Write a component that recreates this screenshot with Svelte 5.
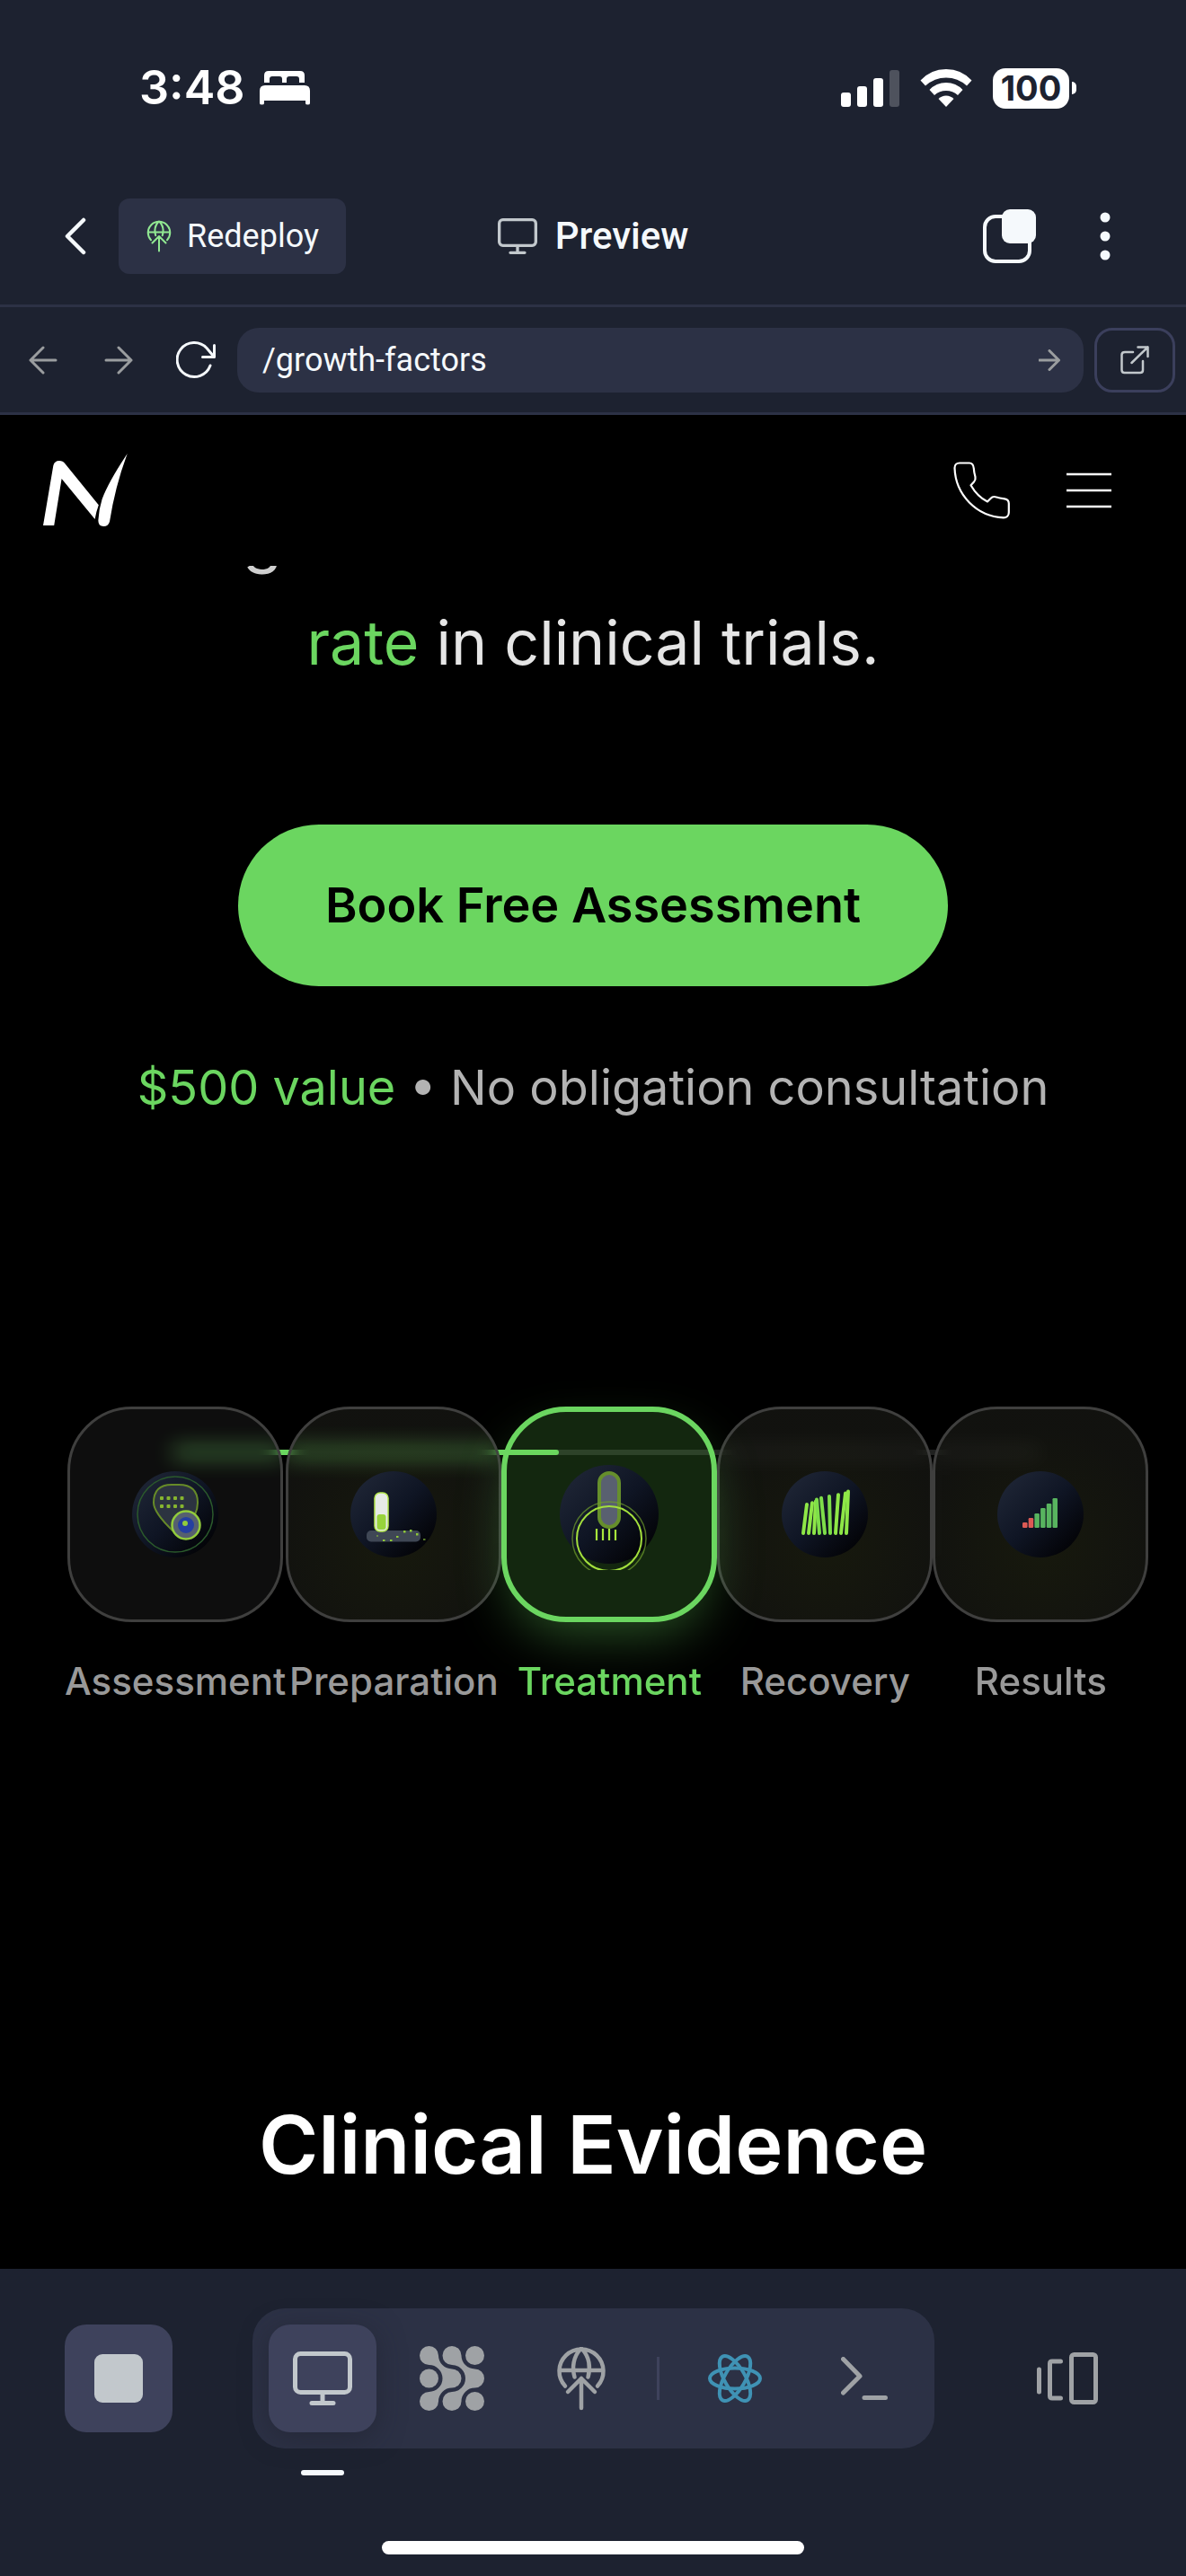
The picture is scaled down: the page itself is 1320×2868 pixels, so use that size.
<script>
  let path = $state('/growth-factors');
  let active = $state('Treatment');
  const steps = ['Assessment', 'Preparation', 'Treatment', 'Recovery', 'Results'];
  const dots = [0, 1, 2, 3].flatMap((c) => [0, 1].map((r) => ({ x: 45 + c * 7.5, y: 42 + r * 9 })));
  const strands = [
    [10, 14], [16, 20], [22, 24], [28, 25], [34, 30], [40, 39], [46, 49], [52, 57], [58, 60]
  ].map(([x, t], i) => ({ x1: x + 28, x2: t + 28, y2: 51 - i * 1.8 }));
</script>

{#snippet globe()}
  <svg class="globe" viewBox="0 0 60 72" aria-hidden="true">
    <path d="M12 44.5A24.5 24.5 0 1 1 48 44.5M6 27H54M29 3.5C21 12 19.500 24 22.500 34.500M31 3.500C39 12 40.500 24 37.500 34.500M30 36V69M15 51L30 36L45 51" />
  </svg>
{/snippet}

{#snippet monitor()}
  <svg class="monitor" viewBox="0 0 66 60" aria-hidden="true">
    <rect x="2.500" y="2.500" width="61" height="43" rx="6" />
    <path d="M33 46V57M21 57.500H45" />
  </svg>
{/snippet}

<div class="screen">
  <div class="status">
    <div class="time">
      <span>3:48</span>
      <svg width="56" height="38" viewBox="0 0 56 38" aria-hidden="true">
        <path fill="#fff" d="M5 13V5Q5 0 10 0H45Q50 0 50 5V13H44V9Q44 6 41 6H33Q30 6 30 9V13H25V9Q25 6 22 6H14Q11 6 11 9V13Z" />
        <path fill="#fff" d="M0 36V22Q0 16 6 16H50Q56 16 56 22V36Q56 37.500 53.500 37.500Q51 37.500 51 36V33H5V36Q5 37.500 2.500 37.500Q0 37.500 0 36Z" />
      </svg>
    </div>
    <div class="signals">
      <svg width="65" height="42" viewBox="0 0 65 42" fill="#fff" aria-hidden="true">
        <rect x="0" y="26" width="11" height="16" rx="3" />
        <rect x="18" y="19" width="11" height="23" rx="3" />
        <rect x="36" y="10" width="11" height="32" rx="3" />
        <rect x="54" y="1" width="11" height="41" rx="3" opacity="0.22" />
      </svg>
      <svg width="58" height="42" viewBox="0 0 58 42" fill="#fff" aria-hidden="true">
        <path d="M0.500 12.500Q12 0 29 0T57.500 12.500L52 18.500Q42 9.500 29 9.500T6 18.500Z" />
        <path d="M10.500 23Q18 15 29 15T47.500 23L42 29Q36.500 24 29 24T16 29Z" />
        <path d="M20.500 33Q24 29.500 29 29.500T37.500 33L29 42Z" />
      </svg>
      <div class="battery"><span>100</span><i></i></div>
    </div>
  </div>

  <header class="title">
    <div class="left">
      <button class="bare" aria-label="Back">
        <svg width="24" height="42" viewBox="0 0 24 42" fill="none" stroke="#f5f9fc" stroke-width="4.500" stroke-linecap="round" stroke-linejoin="round"><path d="M21 3L3 21L21 39" /></svg>
      </button>
      <button class="redeploy">{@render globe()}Redeploy</button>
    </div>
    <h1>{@render monitor()}Preview</h1>
    <div class="right">
      <button class="bare" aria-label="Windows">
        <svg width="60" height="60" viewBox="0 0 60 60" aria-hidden="true">
          <rect x="2" y="8" width="50" height="50" rx="12" fill="none" stroke="#f5f9fc" stroke-width="4" />
          <rect x="21" y="0" width="38" height="38" rx="9" fill="#f5f9fc" />
        </svg>
      </button>
      <button class="bare" aria-label="More">
        <svg width="12" height="54" viewBox="0 0 12 54" fill="#f5f9fc"><circle cx="6" cy="6" r="5.500" /><circle cx="6" cy="27" r="5.500" /><circle cx="6" cy="48" r="5.500" /></svg>
      </button>
    </div>
  </header>

  <nav class="address" aria-label="Address">
    <button class="bare" aria-label="Previous page">
      <svg class="dim" width="32" height="32" viewBox="0 0 32 32"><path d="M30 16H2M16 2L2 16L16 30" /></svg>
    </button>
    <button class="bare" aria-label="Next page">
      <svg class="dim" width="32" height="32" viewBox="0 0 32 32"><path d="M2 16H30M16 2L30 16L16 30" /></svg>
    </button>
    <button class="bare" aria-label="Reload">
      <svg width="44" height="42" viewBox="0 0 44 42" fill="none" stroke="#f5f9fc" stroke-width="3" stroke-linecap="round" stroke-linejoin="round"><path d="M38 27A19 19 0 1 1 34 7.500L42 17M42.500 4.500V17.500H29.500" /></svg>
    </button>
    <form class="field" onsubmit={(e) => e.preventDefault()}>
      <input aria-label="Path" bind:value={path} spellcheck="false" />
      <button class="bare" aria-label="Go">
        <svg class="dim" width="24" height="24" viewBox="0 0 24 24"><path d="M1 12H22.500M12 1.500L22.500 12L12 22.500" /></svg>
      </button>
    </form>
    <button class="open" aria-label="Open in new tab">
      <svg width="32" height="32" viewBox="0 0 32 32" fill="none" stroke="#c2c8cc" stroke-width="2.500" stroke-linecap="round" stroke-linejoin="round"><path d="M14 7H5Q1.500 7 1.500 10V27Q1.500 30 4.500 30H22Q25 30 25 27V17M19.500 1.500H30.500V12M30.500 1.500L12.500 19" /></svg>
    </button>
  </nav>

  <main>
    <div class="site">
      <a href="#home" aria-label="Home">
        <svg width="94" height="82" viewBox="0 0 94 82" fill="#fff" aria-hidden="true">
          <path d="M0 80L11.300 13.500Q12.500 8 18 8Q22 8 24.400 11.300L61.800 57.300Q59 65 57.600 73L20.600 28L12.200 80Z" />
          <path d="M93.800 0Q80.500 35 74 75.700Q72.500 81 67.300 81Q61 81 61.400 74Q62 62 65.600 50.700Q73 31 93.800 0Z" />
        </svg>
      </a>
      <div class="actions">
        <a href="#call" aria-label="Call">
          <svg width="64" height="64" viewBox="0 0 64 64" fill="none" stroke="#fff" stroke-width="2.200" stroke-linejoin="round" aria-hidden="true">
            <path d="M7 1.500H18C21.500 1.500 22.500 4.500 22.800 7.500C23 11 23.500 13.500 24.500 17C25 19.500 24.300 21 23 22.500L19.500 26.200C24 34 30 40.500 38 44.500L41.500 41C43.300 39 45 38.600 47 39.300C50.500 40.400 54 41 57 41.300C60 41.800 61.800 43.500 61.800 46.500V56.500C61.800 60 59.500 62.300 56 62.300C26 61 2.500 37 1.500 7C1.500 3.500 3.500 1.500 7 1.500Z" />
          </svg>
        </a>
        <button class="bare" aria-label="Menu">
          <svg width="50" height="40" viewBox="0 0 50 40" stroke="#fff" stroke-width="2.400"><path d="M0 2H50M0 20H50M0 38H50" /></svg>
        </button>
      </div>
    </div>

    <div class="cut"><span>g</span></div>
    <p class="lead"><em>rate</em> in clinical trials.</p>
    <button class="cta">Book Free Assessment</button>
    <p class="note"><em>$500 value</em> • No obligation consultation</p>

    <div class="steps">
      <div class="track"><i></i></div>
      {#each steps as step}
        <button class="step" class:on={active === step} onclick={() => (active = step)}>
          <span class="card {step.toLowerCase()}">
            <svg width="124" height="124" viewBox="0 0 124 124" aria-hidden="true">
              <defs>
                <linearGradient id="disc-{step}" x1="0.100" y1="0.100" x2="0.900" y2="0.900">
                  <stop offset="0" stop-color="#1e2535" /><stop offset="0.500" stop-color="#0f1524" /><stop offset="1" stop-color="#020205" />
                </linearGradient>
              </defs>
              <circle cx="62" cy="62" r={step === 'Treatment' ? 55 : 48} fill="url(#disc-{step})" />
              {#if step === 'Assessment'}
                <circle cx="62" cy="62" r="42" fill="none" stroke="#2b5a2c" stroke-width="1.500" />
                <path d="M38 49Q38 29 58 29H66Q87 29 87 49Q87 56 84 62L60 81Q38 63 38 49Z" fill="#2c3340" />
                <path d="M84 62Q87 56 87 49Q87 29 66 29H58Q38 29 38 49Q38 60 60 81" fill="none" stroke="#668a28" stroke-width="2" />
                {#each dots as d}<rect x={d.x} y={d.y} width="4" height="4" rx="1" fill="#86b52f" />{/each}
                <circle cx="74" cy="74" r="15.500" fill="#56606f" stroke="#92cb3c" stroke-width="2.500" />
                <circle cx="74" cy="74" r="9" fill="#253fa0" />
                <circle cx="73" cy="72" r="3" fill="#92cb3c" />
              {:else if step === 'Preparation'}
                <rect x="32" y="80" width="60" height="12.500" rx="5" fill="#3f4755" />
                <rect x="41" y="38" width="15" height="43" rx="6" fill="#e6eae6" stroke="#b5e84f" stroke-width="1.500" />
                <rect x="43.500" y="62" width="10" height="17" rx="3" fill="#97d33b" />
                <g fill="#8fc93a"><rect x="50" y="90" width="2.500" height="2" /><rect x="58" y="90" width="2.500" height="2" /><rect x="65" y="86" width="2.500" height="2" /><rect x="73" y="80" width="2.500" height="2.500" /><rect x="80" y="79" width="2.500" height="2.500" /><rect x="87" y="83" width="2.500" height="2.500" /><rect x="95" y="89" width="2.500" height="2" opacity="0.600" /><rect x="43" y="85" width="2" height="2" opacity="0.500" /></g>
              {:else if step === 'Treatment'}
                <rect x="51" y="16" width="22" height="60" rx="11" fill="#596070" stroke="#668f2c" stroke-width="4" />
                <circle cx="62" cy="89" r="41" fill="none" stroke="#6f9e2c" stroke-width="1.500" opacity="0.700" />
                <circle cx="62" cy="89" r="36" fill="none" stroke="#a3df3d" stroke-width="2" />
                <path d="M48 78V91M55 78V91M62 78V91M69 79V91" stroke="#a8e63c" stroke-width="2.200" />
              {:else if step === 'Recovery'}
                {#each strands as s, i}
                  <line x1={s.x1} y1="83" x2={s.x2} y2={s.y2} stroke={i > 2 && i < 6 ? '#7ede4a' : '#8ee747'} stroke-width="4" stroke-linecap="round" />
                {/each}
              {:else}
                {#each [6, 11, 16, 22, 27, 33] as h, i}
                  <rect x={42 + i * 6.700} y={77 - h} width="5.500" height={h} rx="1.200" fill={i < 2 ? '#dc5a55' : '#58b45f'} />
                {/each}
              {/if}
            </svg>
          </span>
          <span class="label">{step}</span>
        </button>
      {/each}
    </div>

    <h2>Clinical Evidence</h2>
  </main>

  <footer>
    <div class="dock">
      <button class="tool chip" aria-label="Stop"><i class="stop"></i></button>
      <div class="group">
        <button class="tool chip current" aria-label="Preview">{@render monitor()}</button>
        <button class="tool" aria-label="Agent">
          <svg width="72" height="72" viewBox="0 0 72 72" fill="#9fa2a5">
            {#each [0, 25.5] as dx}
              <path transform="translate({dx} 0)" d="M21 10.500A15 15 0 0 0 36 25.500A10.500 10.500 0 0 1 36 46.500A15 15 0 0 0 21 61.500A10.500 10.500 0 1 1 10.500 51A15 15 0 0 0 10.500 21A10.500 10.500 0 1 1 21 10.500Z" />
            {/each}
            <circle cx="10.500" cy="36" r="10.500" /><circle cx="61.500" cy="10.500" r="10.500" /><circle cx="61.500" cy="61.500" r="10.500" />
          </svg>
        </button>
        <button class="tool" aria-label="Deploy">{@render globe()}</button>
        <span class="divider"></span>
        <button class="tool" aria-label="React">
          <svg width="64" height="64" viewBox="-32 -32 64 64" fill="none" stroke="#3f92b4" stroke-width="4">
            <ellipse rx="28" ry="11.500" /><ellipse rx="28" ry="11.500" transform="rotate(60)" /><ellipse rx="28" ry="11.500" transform="rotate(120)" />
          </svg>
        </button>
        <button class="tool" aria-label="Console">
          <svg class="line" width="52" height="48" viewBox="0 0 52 48"><path d="M2.500 2.500L21 21.500L2.500 40M26 45.500H49.500" /></svg>
        </button>
      </div>
      <button class="tool" aria-label="Switch device">
        <svg class="line" width="68" height="58" viewBox="0 0 68 58"><path d="M2.500 19V44M26.500 10H17Q14.500 10 14.500 12.500V48.500Q14.500 51 17 51H26.500" /><rect x="38.500" y="2.500" width="27" height="53" rx="3" /></svg>
      </button>
    </div>
    <div class="home"></div>
  </footer>
</div>

<style>
  :global(body) { margin: 0; background: #1d2230; }
  .screen { display: flex; flex-direction: column; min-height: 100vh; background: #1d2230; color: #f5f9fc; font-family: Inter, "Liberation Sans", sans-serif; }
  button { border: 0; padding: 0; margin: 0; background: none; color: inherit; font: inherit; cursor: pointer; }
  svg { display: block; flex: none; }
  p, h1, h2 { margin: 0; }
  em { font-style: normal; color: #6bd660; }
  .bare { display: flex; align-items: center; }

  .status { display: flex; justify-content: space-between; align-items: center; height: 196px; padding: 0 122px 0 155px; box-sizing: border-box; color: #fff; }
  .time { display: flex; align-items: center; gap: 16px; font-size: 52px; font-weight: 600; line-height: 66px; }
  .signals { display: flex; align-items: center; gap: 23px; }
  .battery { display: flex; align-items: center; gap: 3px; }
  .battery span { width: 85px; height: 45px; border-radius: 14px; background: #fff; color: #1d2230; font-size: 38px; font-weight: 700; line-height: 45px; text-align: center; }
  .battery i { width: 5px; height: 14px; border-radius: 0 5px 5px 0; background: #fff; }

  .title { display: grid; grid-template-columns: 1fr auto 1fr; align-items: center; padding: 25px 84px 34px 72px; border-bottom: 3px solid #2c3145; font-family: Roboto, "Open Sans", sans-serif; }
  .left { display: flex; align-items: center; gap: 36px; }
  .right { display: flex; align-items: center; justify-content: flex-end; gap: 70px; }
  .redeploy { display: flex; align-items: center; gap: 16px; height: 84px; padding: 0 30px; border-radius: 12px; background: #2c3145; font-size: 36px; line-height: 48px; }
  .redeploy .globe { width: 30px; height: 36px; stroke: #91e892; stroke-width: 4; }
  h1 { display: flex; align-items: center; gap: 20px; margin-left: 12px; font-size: 42px; font-weight: 500; line-height: 54px; }
  h1 .monitor { width: 44px; height: 40px; stroke: #c2c8cc; }
  .globe { width: 60px; height: 72px; fill: none; stroke: #9fa2a5; stroke-width: 4.5; stroke-linecap: round; stroke-linejoin: round; }
  .monitor { width: 66px; height: 60px; fill: none; stroke: #c2c8cc; stroke-width: 5; stroke-linecap: round; }
  .dim { fill: none; stroke: #9a9d9f; stroke-width: 3; stroke-linecap: round; stroke-linejoin: round; }
  .line { fill: none; stroke: #9fa2a5; stroke-width: 5; stroke-linecap: round; stroke-linejoin: round; }

  .address { display: flex; align-items: center; padding: 23px 12px 22px 32px; border-bottom: 3px solid #2c3145; font-family: Roboto, "Open Sans", sans-serif; }
  .address > .bare { margin-right: 52px; }
  .address > .bare:nth-child(2) { margin-right: 48px; }
  .address > .bare:nth-child(3) { margin-right: 24px; }
  .field { display: flex; flex: 1; align-items: center; height: 72px; padding: 0 26px 0 28px; border-radius: 24px; background: #2c3145; margin-right: 12px; }
  .field input { flex: 1; min-width: 0; padding: 0; border: 0; outline: 0; background: none; color: inherit; font: inherit; font-size: 36px; }
  .open { display: flex; align-items: center; justify-content: center; width: 90px; height: 72px; border: 3px solid #3b3f5c; border-radius: 20px; box-sizing: border-box; }

  main { display: flex; flex: 1; flex-direction: column; align-items: center; background: #000; }
  .site { display: flex; align-items: center; justify-content: space-between; align-self: stretch; height: 168px; padding: 0 83px 0 48px; }
  .actions { display: flex; align-items: center; gap: 62px; }
  .cut { display: flex; align-items: flex-end; align-self: stretch; height: 26px; padding-left: 270px; overflow: hidden; color: #cfcfcf; font-size: 72px; line-height: 117px; }
  .lead { color: #e5e5e5; font-size: 68px; font-weight: 400; line-height: 118px; }
  .cta { height: 180px; margin-top: 144px; padding: 0 97px 2px; border-radius: 90px; background: #6bd660; color: #000; font-size: 54px; font-weight: 600; }
  .note { margin-top: 72px; color: #b3b3b3; font-size: 54px; line-height: 81px; }

  .steps { position: relative; display: flex; align-self: stretch; margin-top: 315px; padding: 0 42px 0 72px; }
  .track { position: absolute; top: 48px; left: 192px; right: 162px; height: 6px; border-radius: 3px; background: #202120; }
  .track i { display: block; width: 44.5%; height: 6px; border-radius: 3px; background: #6bd660; }
  .step { position: relative; display: flex; flex: 1 1 240px; min-width: min-content; flex-direction: column; align-items: center; gap: 36px; color: #999; }
  .card { display: flex; align-items: center; justify-content: center; width: 240px; height: 240px; box-sizing: border-box; border: 3px solid #3f3f3e; border-radius: 72px; background: radial-gradient(circle at 50% 65%, rgba(225, 245, 130, 0.1), rgba(235, 240, 200, 0.075) 70%); backdrop-filter: blur(12px); }
  .assessment { background: rgba(250, 255, 250, 0.055); }
  .on { z-index: 1; color: #6bd660; }
  .on .card { border: 6px solid #6bd660; background: rgba(107, 214, 84, 0.18); backdrop-filter: none; box-shadow: 0 24px 60px -12px rgba(107, 214, 96, 0.4); }
  .label { font-size: 42px; font-weight: 500; line-height: 60px; }
  h2 { margin-top: 432px; padding-bottom: 84px; color: #fff; font-size: 90px; font-weight: 600; line-height: 108px; }

  footer { display: flex; flex-direction: column; align-items: center; padding: 44px 72px 24px; }
  .dock { display: flex; align-items: center; justify-content: space-between; align-self: stretch; }
  .group { display: flex; align-items: center; gap: 24px; padding: 18px; border-radius: 36px; background: #2c3145; }
  .tool { position: relative; display: flex; align-items: center; justify-content: center; width: 120px; height: 120px; border-radius: 24px; }
  .chip { background: #3e425c; }
  .stop { width: 54px; height: 54px; border-radius: 9px; background: #c2c8cc; }
  .current { box-shadow: 0 6px 30px rgba(29, 31, 43, 0.5); }
  .current::after { content: ""; position: absolute; bottom: -48px; left: 36px; width: 48px; height: 6px; border-radius: 3px; background: #f5f9fc; }
  .divider { width: 3px; height: 48px; background: #3e425c; }
  .home { width: 40%; height: 15px; margin-top: 103px; border-radius: 8px; background: #fff; }
</style>
